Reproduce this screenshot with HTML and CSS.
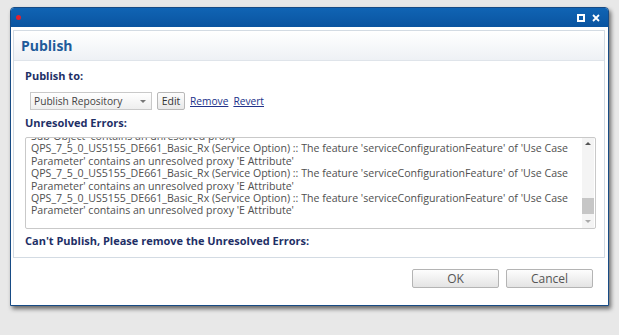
FILE: index.html
```html
<!DOCTYPE html>
<html lang="en">
<head>
  <meta charset="UTF-8">
  <meta name="viewport" content="width=device-width, initial-scale=1.0">
  <title>Publish</title>
  <link rel="stylesheet" href="styles.css">
</head>
<body>
  <div class="desktop">
    <div class="window">
      <div class="titlebar">
        <span class="dot"></span>
        <div class="controls">
          <span class="max"></span>
          <svg class="close" width="8" height="8" viewBox="0 0 8 8"><path d="M1 1L7 7M7 1L1 7" stroke="#fff" stroke-width="1.8"/></svg>
        </div>
      </div>
      <div class="frame">
        <div class="panel">
          <div class="panel-header">Publish</div>
          <div class="panel-body">
            <p class="label">Publish to:</p>
            <div class="target-row">
              <div class="select">
                <span>Publish Repository</span>
                <span class="caret"></span>
              </div>
              <button class="small-button">Edit</button>
              <a href="#" class="link">Remove</a>
              <a href="#" class="link">Revert</a>
            </div>
            <p class="label label-errors">Unresolved Errors:</p>
            <div class="errors">
              <div class="errors-text">
                <div class="errors-lines">
                  <div>Sub-Object' contains an unresolved proxy</div>
                  <div>QPS_7_5_0_US5155_DE661_Basic_Rx (Service Option) :: The feature 'serviceConfigurationFeature' of 'Use Case</div>
                  <div>Parameter' contains an unresolved proxy 'E Attribute'</div>
                  <div>QPS_7_5_0_US5155_DE661_Basic_Rx (Service Option) :: The feature 'serviceConfigurationFeature' of 'Use Case</div>
                  <div>Parameter' contains an unresolved proxy 'E Attribute'</div>
                  <div>QPS_7_5_0_US5155_DE661_Basic_Rx (Service Option) :: The feature 'serviceConfigurationFeature' of 'Use Case</div>
                  <div>Parameter' contains an unresolved proxy 'E Attribute'</div>
                </div>
              </div>
              <div class="scrollbar">
                <span class="arrow arrow-up"></span>
                <div class="track"><span class="thumb"></span></div>
                <span class="arrow arrow-down"></span>
              </div>
            </div>
            <p class="label label-warning">Can't Publish, Please remove the Unresolved Errors:</p>
          </div>
        </div>
        <div class="actions">
          <button class="button">OK</button>
          <button class="button">Cancel</button>
        </div>
      </div>
    </div>
  </div>
</body>
</html>
```
FILE: styles.css
```css
:root {
  --navy: #1e2f66;
  --title-blue: #1f5b9a;
  --link: #21328a;
  --text: #505050;
  --border: #c9c9c9;
}
body {
  margin: 0;
  background: #e8e8e8;
  font-family: 'Open Sans', sans-serif;
}
.desktop {
  height: 335px;
  box-sizing: border-box;
  padding: 7px 0 0 10px;
}
.window {
  width: 597px;
  height: 297px;
  border: 1px solid #174b85;
  border-radius: 4px 4px 0 0;
  background: #ffffff;
  box-shadow: 2px 3px 4px rgba(0, 0, 0, 0.55);
  display: flex;
  flex-direction: column;
}
.titlebar {
  height: 19px;
  background: linear-gradient(#1064b4, #0a54a0);
  border-radius: 3px 3px 0 0;
  display: flex;
  align-items: center;
  justify-content: space-between;
  padding: 0 8px 0 5px;
}
.dot {
  width: 5px;
  height: 5px;
  border-radius: 50%;
  background: #e4202c;
}
.controls {
  display: flex;
  align-items: center;
  gap: 7px;
}
.max {
  width: 4px;
  height: 4px;
  border: 2px solid #ffffff;
}
.frame {
  flex: 1;
  display: flex;
  flex-direction: column;
  padding: 3px 3px 0 2px;
}
.panel {
  height: 228px;
  box-sizing: border-box;
  border: 1px solid #d3dbe3;
}
.panel-header {
  height: 29px;
  line-height: 29px;
  padding-left: 7px;
  font-size: 14px;
  font-weight: 700;
  color: var(--title-blue);
  background: linear-gradient(#ffffff, #eef1f5);
  border-bottom: 1px solid #dfe4ea;
}
.panel-body {
  padding: 8px 10px 0 11px;
}
.label {
  margin: 0;
  font-size: 11px;
  font-weight: 700;
  line-height: 14px;
  color: var(--navy);
}
.target-row {
  display: flex;
  align-items: center;
  gap: 5px;
  margin: 9px 0 0 5px;
  height: 18px;
}
.select {
  width: 122px;
  height: 18px;
  box-sizing: border-box;
  border: 1px solid var(--border);
  background: linear-gradient(#ffffff, #eeeeee);
  display: flex;
  align-items: center;
  justify-content: space-between;
  padding: 0 5px 0 3px;
  font-size: 10.2px;
  color: #444444;
}
.caret {
  width: 0;
  height: 0;
  border-left: 3px solid transparent;
  border-right: 3px solid transparent;
  border-top: 3px solid #777777;
}
.small-button {
  height: 18px;
  width: 28px;
  padding: 0;
  border: 1px solid #b8b8b8;
  border-radius: 2px;
  background: linear-gradient(#fdfdfd, #e8e8e8);
  font-family: inherit;
  font-size: 10.5px;
  color: #333333;
}
.link {
  font-size: 10.2px;
  color: var(--link);
}
.label-errors {
  margin-top: 6px;
}
.errors {
  margin-top: 7px;
  width: 571px;
  height: 92px;
  box-sizing: border-box;
  border: 1px solid var(--border);
  border-radius: 2px;
  display: flex;
}
.errors-text {
  flex: 1;
  overflow: hidden;
  padding-left: 5px;
}
.errors-lines {
  margin-top: -8px;
  font-size: 10.6px;
  line-height: 12.4px;
  color: var(--text);
  white-space: nowrap;
}
.scrollbar {
  width: 12px;
  margin-right: 1px;
  display: flex;
  flex-direction: column;
  align-items: center;
  background: #f4f4f4;
}
.arrow {
  width: 0;
  height: 0;
  border-left: 3px solid transparent;
  border-right: 3px solid transparent;
}
.arrow-up {
  margin-top: 4px;
  border-bottom: 3px solid #555555;
}
.arrow-down {
  margin-bottom: 5px;
  border-top: 3px solid #aaaaaa;
}
.track {
  flex: 1;
  width: 100%;
}
.thumb {
  display: block;
  margin-top: 53px;
  height: 16px;
  background: #c6c6c6;
}
.label-warning {
  margin-top: 5px;
}
.actions {
  display: flex;
  justify-content: flex-end;
  gap: 7px;
  padding: 11px 12px 0 0;
}
.button {
  width: 87px;
  height: 19px;
  padding: 0;
  border: 1px solid #b4b4b4;
  border-radius: 2px;
  background: linear-gradient(#fdfdfd, #e4e4e4);
  font-family: inherit;
  font-size: 12px;
  color: #555555;
}
```
